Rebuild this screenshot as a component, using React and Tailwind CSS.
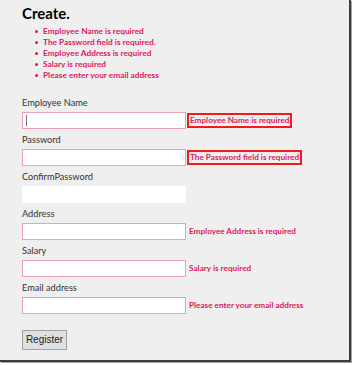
import React from "react";

// Validation summary shown above the form
const summary = [
  "Employee Name is required",
  "The Password field is required.",
  "Employee Address is required",
  "Salary is required",
  "Please enter your email address",
];

// Form fields with their inline message (boxed = highlighted with a red frame)
const fields = [
  { label: "Employee Name", error: "Employee Name is required", boxed: true, caret: true },
  { label: "Password", error: "The Password field is required", boxed: true },
  { label: "ConfirmPassword", error: null, plain: true },
  { label: "Address", error: "Employee Address is required" },
  { label: "Salary", error: "Salary is required" },
  { label: "Email address", error: "Please enter your email address" },
];

const Field = ({ label, error, boxed, caret, plain }) => (
  <div className="mb-[5px]">
    <div className="text-[9.2px] leading-[12px] text-[#333]">{label}</div>
    <div className="mt-[3px] flex items-center">
      <div className="relative">
        <input
          type="text"
          readOnly
          className={
            plain
              ? "block h-[17px] w-[164px] border border-white bg-white outline-none"
              : "block h-[17px] w-[164px] border border-[#eba2b9] bg-white outline-none"
          }
        />
        {caret && (
          <span className="absolute left-[4px] top-[3px] h-[11px] w-px bg-[#777]" />
        )}
      </div>
      {error &&
        (boxed ? (
          <span className="ml-px border-2 border-[#f21b1b] px-px py-px text-[8.2px] font-bold leading-[9px] text-[#e0175c]">
            {error}
          </span>
        ) : (
          <span className="ml-[3px] text-[8.2px] font-bold leading-[9px] text-[#e0175c]">
            {error}
          </span>
        ))}
    </div>
  </div>
);

export default function App() {
  return (
    <div className="h-[365px] w-[354px] bg-white">
      <div
        className="h-[362px] w-[351px] border-b-2 border-r-2 border-[#3c3c3c] bg-[#efefef] pl-[22px] shadow-[1px_1px_0_#a5a5a5]"
        style={{ fontFamily: 'Lato, "Noto Sans", sans-serif' }}
      >
        <h1 className="pt-[3px] text-[15px] font-bold leading-[20px] text-black">Create.</h1>

        <ul className="mt-[3px]">
          {summary.map((msg) => (
            <li key={msg} className="flex h-[11px] items-center">
              <span className="ml-[13px] h-[3px] w-[3px] rounded-full bg-[#e0175c]" />
              <span className="ml-[5px] text-[8.3px] font-bold leading-[11px] text-[#e0175c]">
                {msg}
              </span>
            </li>
          ))}
        </ul>

        <form className="mt-[16px]" onSubmit={(e) => e.preventDefault()}>
          {fields.map((f) => (
            <Field key={f.label} {...f} />
          ))}

          <button
            type="submit"
            className="mt-[11px] h-[20px] w-[45px] border border-[#9da1a4] bg-[#dde1e4] text-[10px] leading-[18px] text-[#222]"
            style={{ fontFamily: '"Liberation Sans", Arial, sans-serif' }}
          >
            Register
          </button>
        </form>
      </div>
    </div>
  );
}
